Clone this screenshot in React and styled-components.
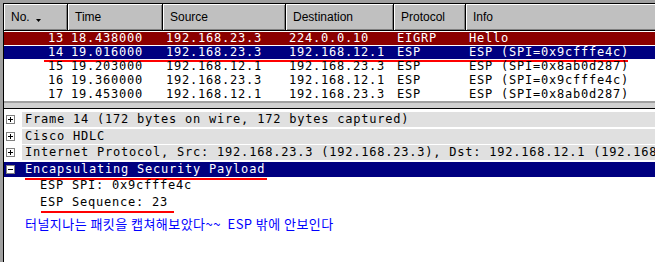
import React from 'react';
import styled, { createGlobalStyle } from 'styled-components';

const Global = createGlobalStyle`
  html, body { margin: 0; padding: 0; background: #fff; overflow: hidden; }
`;

const COLS = '64px 95px 123px 108px 72px 320px';
const MONO = '"DejaVu Sans Mono", "Liberation Mono", monospace';

const Window = styled.div`
  width: 655px;
  height: 262px;
  box-sizing: border-box;
  border-top: 3px solid #a0a0a0;
  border-left: 3px solid #a0a0a0;
  background: #fff;
  overflow: hidden;
`;

const Inner = styled.div`
  height: 100%;
  box-sizing: border-box;
  border-top: 1px solid #000;
  border-left: 1px solid #000;
  display: flex;
  flex-direction: column;
`;

const ListPane = styled.div`
  height: 97px;
  flex: none;
  overflow: hidden;
`;

const Header = styled.div`
  display: grid;
  grid-template-columns: ${COLS};
  height: 27px;
`;

const HeadCell = styled.div`
  box-sizing: border-box;
  background: #c0c0c0;
  border-right: 1px solid #000;
  border-bottom: 1px solid #000;
  box-shadow: inset 1px 1px #fff, inset -1px -1px #808080;
  font: 12px "Liberation Sans", Arial, sans-serif;
  color: #000;
  padding-left: 7px;
  display: flex;
  align-items: center;
  gap: 6px;
`;

const SortMark = styled.svg`
  margin-top: 7px;
`;

const Row = styled.div`
  position: relative;
  display: grid;
  grid-template-columns: ${COLS};
  height: 13px;
  margin-top: 1px;
  background: ${p => (p.$sel === 'red' ? '#8b0000' : p.$sel === 'blue' ? '#000080' : 'transparent')};
  color: ${p => (p.$sel ? '#fff' : '#000')};
  font-family: ${MONO};
  font-size: 12px;
  letter-spacing: 0.78px;
  line-height: 13px;
  white-space: pre;
`;

const Cell = styled.span`
  padding: ${p => (p.$right ? '0 4px 0 0' : '0 0 0 3px')};
  text-align: ${p => (p.$right ? 'right' : 'left')};
  overflow: hidden;
`;

const Mark = styled.span`
  position: absolute;
  height: 2px;
  background: #ff0000;
  left: ${p => p.$left}px;
  width: ${p => p.$w}px;
  top: ${p => p.$top}px;
`;

const Splitter = styled.div`
  flex: none;
  height: 5px;
  border-top: 2px solid #a0a0a0;
  background: #d0d0d0;
`;

const TreePane = styled.div`
  flex: 1;
  border-top: 1px solid #000;
  padding-top: 3px;
`;

const TreeRow = styled.div`
  position: relative;
  display: flex;
  height: 15px;
  margin-bottom: 1.5px;
  padding-left: ${p => p.$indent || 0}px;
  background: ${p => (p.$sel ? '#000080' : 'transparent')};
  color: ${p => (p.$sel ? '#fff' : '#000')};
  font-family: ${MONO};
  font-size: 12px;
  letter-spacing: 0.78px;
  line-height: 15px;
  white-space: pre;
`;

const Expander = styled.div`
  width: 18px;
  flex: none;
  box-sizing: border-box;
  padding-left: 2px;
  display: flex;
  align-items: center;
`;

const Label = styled.div`
  flex: 1;
  padding-left: 3px;
  background: ${p => (p.$band ? '#e0e0e0' : 'transparent')};
`;

const Note = styled.div`
  margin: 6px 0 0 21px;
  color: #0000ff;
  font: 13px "Noto Sans CJK KR", "Noto Sans", sans-serif;
  letter-spacing: 0.45px;
  line-height: 16px;
  white-space: pre;
`;

const Box = ({ open }) => (
  <svg width="9" height="9" viewBox="0 0 9 9" shapeRendering="crispEdges">
    <rect x="0.5" y="0.5" width="8" height="8" fill="#fff" stroke="#808080" />
    <path d="M2 4.5h5" stroke="#000" />
    {!open && <path d="M4.5 2v5" stroke="#000" />}
  </svg>
);

const packets = [
  { no: 13, time: '18.438000', src: '192.168.23.3', dst: '224.0.0.10', proto: 'EIGRP', info: 'Hello', sel: 'red' },
  { no: 14, time: '19.016000', src: '192.168.23.3', dst: '192.168.12.1', proto: 'ESP', info: 'ESP (SPI=0x9cfffe4c)', sel: 'blue', mark: true },
  { no: 15, time: '19.203000', src: '192.168.12.1', dst: '192.168.23.3', proto: 'ESP', info: 'ESP (SPI=0x8ab0d287)' },
  { no: 16, time: '19.360000', src: '192.168.23.3', dst: '192.168.12.1', proto: 'ESP', info: 'ESP (SPI=0x9cfffe4c)' },
  { no: 17, time: '19.453000', src: '192.168.12.1', dst: '192.168.23.3', proto: 'ESP', info: 'ESP (SPI=0x8ab0d287)' },
];

const tree = [
  'Frame 14 (172 bytes on wire, 172 bytes captured)',
  'Cisco HDLC',
  'Internet Protocol, Src: 192.168.23.3 (192.168.23.3), Dst: 192.168.12.1 (192.168.12.1)',
];

export default function App() {
  return (
    <>
      <Global />
      <Window>
        <Inner>
          <ListPane>
            <Header>
              <HeadCell>
                No.
                <SortMark width="5" height="3" viewBox="0 0 5 3">
                  <path d="M0 0h5L2.5 3z" fill="#000" />
                </SortMark>
              </HeadCell>
              <HeadCell>Time</HeadCell>
              <HeadCell>Source</HeadCell>
              <HeadCell>Destination</HeadCell>
              <HeadCell>Protocol</HeadCell>
              <HeadCell>Info</HeadCell>
            </Header>
            {packets.map(p => (
              <Row key={p.no} $sel={p.sel}>
                <Cell $right>{p.no}</Cell>
                <Cell>{p.time}</Cell>
                <Cell>{p.src}</Cell>
                <Cell>{p.dst}</Cell>
                <Cell>{p.proto}</Cell>
                <Cell>{p.info}</Cell>
                {p.mark && <Mark $left={40} $w={584} $top={14} />}
              </Row>
            ))}
          </ListPane>
          <Splitter />
          <TreePane>
            {tree.map(t => (
              <TreeRow key={t}>
                <Expander><Box /></Expander>
                <Label $band>{t}</Label>
              </TreeRow>
            ))}
            <TreeRow $sel>
              <Expander><Box open /></Expander>
              <Label>Encapsulating Security Payload</Label>
              <Mark $left={21} $w={242} $top={16.5} />
            </TreeRow>
            <TreeRow $indent={36}>ESP SPI: 0x9cfffe4c</TreeRow>
            <TreeRow $indent={36}>
              ESP Sequence: 23
              <Mark $left={37} $w={133} $top={16.5} />
            </TreeRow>
            <Note>터널지나는 패킷을 캡쳐해보았다~~  ESP 밖에 안보인다</Note>
          </TreePane>
        </Inner>
      </Window>
    </>
  );
}
